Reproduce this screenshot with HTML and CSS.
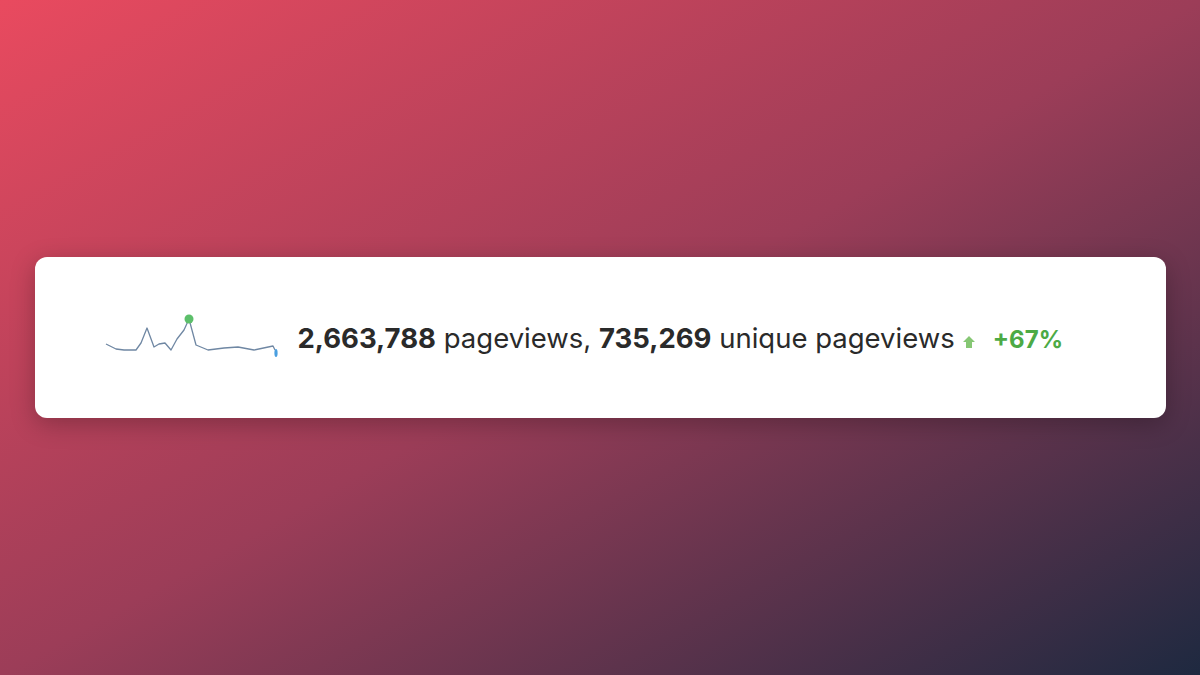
FILE: index.html
```html
<!DOCTYPE html>
<html>
<head>
<meta charset="utf-8">
<link rel="stylesheet" href="styles.css">
</head>
<body>
<div class="card">
  <svg class="spark" width="180" height="50" viewBox="0 0 180 50">
    <polyline fill="none" stroke="#6f87a3" stroke-width="1.3" stroke-linejoin="round" points="5,31 15,36 23,37 35,37 40,30 46,15 53,34 58,31 64,30 70,37 76,26 83,17 88,6 95,32 107,37 123,35 137,34 153,37 172,33 174,37"/>
    <circle cx="88" cy="6" r="4.5" fill="#5cbf6a"/>
    <ellipse cx="175" cy="40" rx="1.6" ry="4" fill="#4a9fe0"/>
  </svg>
  <p class="stats"><b>2,663,788</b> pageviews, <b>735,269</b> unique pageviews<svg class="arrow" width="14" height="14" viewBox="0 0 14 14"><path d="M7 1 L13 7 L10 7 L10 13 L4 13 L4 7 L1 7 Z" fill="#86c774"/></svg><span class="delta">+67%</span></p>
</div>
</body>
</html>
```
FILE: styles.css
```css
html, body { margin: 0; padding: 0; }
body {
  width: 1200px;
  height: 675px;
  display: flex;
  align-items: center;
  justify-content: center;
  background: linear-gradient(to bottom right, #e94a5f 0%, #9c3d58 50%, #1e2940 100%);
  font-family: Inter, "Liberation Sans", sans-serif;
}
.card {
  width: 1131px;
  height: 161px;
  box-sizing: border-box;
  background: #fff;
  border-radius: 12px;
  box-shadow: 0 6px 24px rgba(0,0,0,0.25);
  display: flex;
  align-items: center;
  padding-left: 66px;
  gap: 17px;
}
.spark { flex: none; }
.stats {
  margin: 0;
  font-size: 27.5px;
  color: #2a2a2a;
  white-space: nowrap;
}
.stats b { font-weight: 700; }
.arrow { margin: 0 17px 0 7px; vertical-align: -1px; }
.delta { color: #4caa45; font-weight: 700; font-size: 24px; }
```
